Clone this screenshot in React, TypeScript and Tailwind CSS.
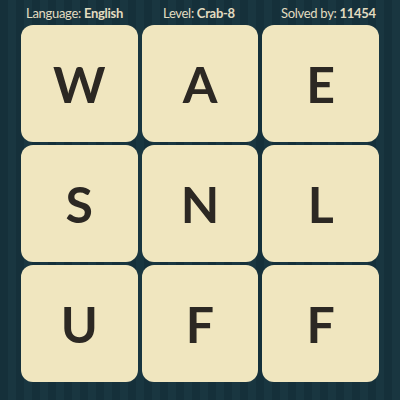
import React from "react";

const letters = ["W", "A", "E", "S", "N", "L", "U", "F", "F"];

export default function App() {
  return (
    <div
      className="w-[400px] h-[400px] overflow-hidden bg-[repeating-linear-gradient(90deg,#15303a_0px,#15303a_8px,#193640_8px,#193640_16px)] flex flex-col"
      style={{ fontFamily: "Lato, 'Noto Sans', sans-serif" }}
    >
      <div className="h-[25px] flex items-center text-[13px] tracking-[-0.3px] text-[#e2dcc0] pl-[26px] whitespace-nowrap pt-[2px]">
        <div className="w-[137px] shrink-0">
          Language: <span className="font-bold">English</span>
        </div>
        <div className="w-[118px] shrink-0">
          Level: <span className="font-bold">Crab-8</span>
        </div>
        <div className="shrink-0">
          Solved by: <span className="font-bold">11454</span>
        </div>
      </div>
      <div className="ml-[21px] w-[358px] grid grid-cols-3 gap-x-[4px] gap-y-[3px]">
        {letters.map((l, i) => (
          <div
            key={i}
            className="h-[117px] rounded-[12px] bg-[#f0e6bf] flex items-center justify-center text-[50px] font-bold text-[#2c2823] leading-none"
          >
            {l}
          </div>
        ))}
      </div>
    </div>
  );
}
